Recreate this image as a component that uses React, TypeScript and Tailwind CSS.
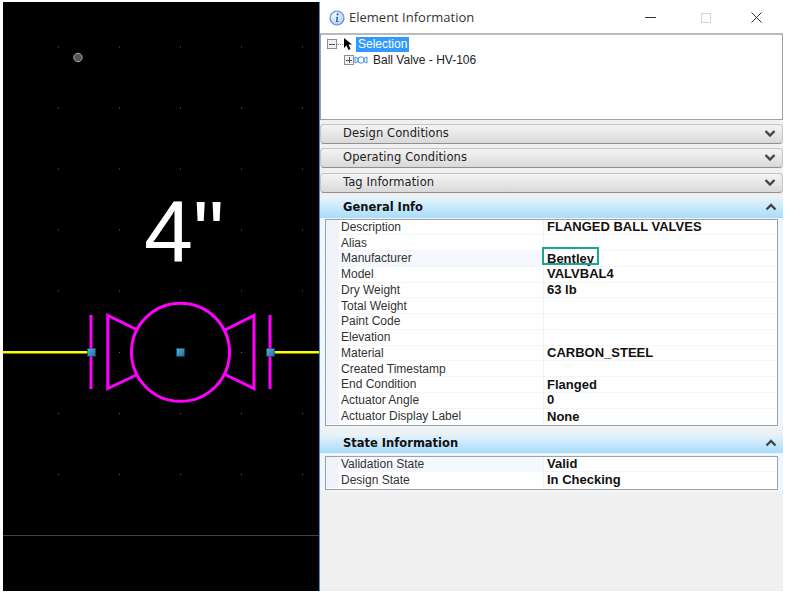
const SANS = "font-['Liberation_Sans',Arial,sans-serif]";

function Canvas() {
  const xs = [58, 119, 180, 241, 302];
  const ys = [46.5, 107.5, 168.5, 229.5, 290.5, 352, 413, 474];
  return (
    <div className="w-[316px] h-full bg-black shrink-0">
      <svg width="316" height="589" viewBox="3 2 316 589" className="block">
        {xs.map((x) =>
          ys.map((y) => <rect key={x + "-" + y} x={x} y={y} width="1" height="1" fill="#666" />)
        )}
        <circle cx="78" cy="57.5" r="4.2" fill="#555" stroke="#aaa" strokeWidth="1" />
        <line x1="3" y1="535.5" x2="319" y2="535.5" stroke="#444" strokeWidth="1" />
        <text x="144" y="262" fill="#fff" fontSize="88" fontFamily="'Liberation Sans',Arial,sans-serif">
          4"
        </text>
        <line x1="3" y1="352.3" x2="88" y2="352.3" stroke="#ffff00" strokeWidth="2.4" />
        <line x1="274" y1="352.3" x2="319" y2="352.3" stroke="#ffff00" strokeWidth="2.4" />
        <g fill="none" stroke="#ff00ff" strokeWidth="3">
          <circle cx="180.5" cy="352.3" r="49" />
          <line x1="91" y1="315" x2="91" y2="389" />
          <line x1="270" y1="315" x2="270" y2="389" />
          <path d="M137.5 330 L107.8 315.5 V388.5 L137.5 374.5" />
          <path d="M225 330 L254 315.5 V388.5 L225 374.5" />
        </g>
        <defs>
          <linearGradient id="nodeFill" x1="0" y1="0" x2="1" y2="1">
            <stop offset="0" stopColor="#5fb0dc" />
            <stop offset="1" stopColor="#1f6f9f" />
          </linearGradient>
        </defs>
        {[91.5, 180.5, 270.5].map((x) => (
          <rect key={x} x={x - 4} y="348.3" width="8" height="8" fill="url(#nodeFill)" stroke="#0f4a66" strokeWidth="0.6" />
        ))}
      </svg>
    </div>
  );
}

function Chevrons({ up, double }: { up?: boolean; double?: boolean }) {
  return (
    <svg width="12" height="10" viewBox="0 0 12 10" className="block">
      <g fill="none" stroke="#444" strokeWidth="2.4">
        {up ? (
          <path d="M1.5 7.5 L6 3 L10.5 7.5" />
        ) : (
          <path d="M1.5 2 L6 6.5 L10.5 2" />
        )}
        {double && <path d="M1.5 5.5 L6 10 L10.5 5.5" stroke="#777" strokeWidth="1.4" />}
      </g>
    </svg>
  );
}

function CollapsedHeader({ title, className }: { title: string; className: string }) {
  return (
    <div className={`${className} h-5 rounded-[4px] border border-[#c4c4c4] border-b-[#8f8f8f] bg-gradient-to-b from-[#f4f4f4] to-[#d9d9d9] flex items-center justify-between pl-[22px] pr-[6px]`}>
      <span className="font-['DejaVu_Sans',Verdana,sans-serif] text-[11.5px] tracking-[0.1px] text-[#222]">{title}</span>
      <Chevrons />
    </div>
  );
}

function OpenHeader({ title, className }: { title: string; className: string }) {
  return (
    <div className={`${className} rounded-t-[4px] bg-gradient-to-b from-[#e6f4fd] to-[#a9dcfa] flex items-center justify-between pl-[23px] pr-[6px]`}>
      <span className="font-['DejaVu_Sans',Verdana,sans-serif] font-bold text-[11.5px] text-[#111] pt-[2px]">{title}</span>
      <Chevrons up />
    </div>
  );
}

function Row({ label, value, tint, last }: { label: string; value?: string; tint?: boolean; last?: boolean }) {
  return (
    <div className={`flex h-[15.75px] ${last ? "" : "border-b border-[#f2f5f9]"}`}>
      <div className={`w-[13px] shrink-0 bg-[#f0f4fa]`} />
      <div className={`w-[205px] shrink-0 pl-[2px] flex items-center text-[12px] text-[#333] border-r border-[#eef1f5] ${tint ? "bg-[#f5f8fc]" : "bg-white"} ${SANS}`}>
        {label}
      </div>
      <div className={`flex-1 pl-[3px] flex items-center text-[13px] font-bold text-[#111] bg-white ${SANS}`}>
        {value === "Bentley" ? (
          <span className="relative">
            {value}
            <span className="absolute -left-[5px] -top-[2px] w-[57px] h-[18px] border-[2px] border-[#1fa58f]" />
          </span>
        ) : (
          value
        )}
      </div>
    </div>
  );
}

const general: [string, string?][] = [
  ["Description", "FLANGED BALL VALVES"],
  ["Alias"],
  ["Manufacturer", "Bentley"],
  ["Model", "VALVBAL4"],
  ["Dry Weight", "63 lb"],
  ["Total Weight"],
  ["Paint Code"],
  ["Elevation"],
  ["Material", "CARBON_STEEL"],
  ["Created Timestamp"],
  ["End Condition", "Flanged"],
  ["Actuator Angle", "0"],
  ["Actuator Display Label", "None"],
];

function Tree() {
  return (
    <div className={`mt-0 h-[87px] bg-white border-t-2 border-t-[#b8bcc0] border-x border-x-[#a0a0a0] border-b border-b-[#a0a0a0] pl-[6px] pt-[1px] ${SANS}`}>
      <div className="flex items-center h-[16px]">
        <span className="w-[10px] h-[10px] border border-[#8a8f96] bg-[#eef0f2] flex items-center justify-center shrink-0">
          <span className="w-[6px] h-[1px] bg-[#555]" />
        </span>
        <span className="w-[6px] border-t border-dotted border-[#999]" />
        <svg width="10" height="14" viewBox="0 0 10 14" className="shrink-0">
          <path d="M1 1 V11 L3.5 8.5 L5.5 13 L7.5 12 L5.5 7.5 H9 Z" fill="#000" />
        </svg>
        <span className="ml-[3px] h-[15px] px-[2px] bg-[#3399ff] text-white text-[12px] leading-[15px] w-[53px]">Selection</span>
      </div>
      <div className="flex items-center h-[16px] pl-[17px]">
        <span className="w-[10px] h-[10px] border border-[#8a8f96] bg-[#eef0f2] flex items-center justify-center relative shrink-0">
          <span className="w-[6px] h-[1px] bg-[#555]" />
          <span className="absolute w-[1px] h-[6px] bg-[#555]" />
        </span>
        <svg width="14" height="10" viewBox="0 0 14 10" className="shrink-0">
          <g fill="none" stroke="#3f8fe0" strokeWidth="1">
            <path d="M1 2 V8 L4 6.5 V3.5 Z" />
            <path d="M13 2 V8 L10 6.5 V3.5 Z" />
            <circle cx="7" cy="5" r="3.2" />
          </g>
        </svg>
        <span className="ml-[5px] text-[12px] text-[#222]">Ball Valve - HV-106</span>
      </div>
    </div>
  );
}

function TitleBar() {
  return (
    <div className="h-[31px] flex items-center bg-white pl-[9px]">
      <svg width="16" height="16" viewBox="0 0 16 16" className="shrink-0">
        <defs>
          <radialGradient id="infoBg" cx="0.4" cy="0.35" r="0.75">
            <stop offset="0" stopColor="#ffffff" />
            <stop offset="1" stopColor="#a9c5f2" />
          </radialGradient>
        </defs>
        <circle cx="8" cy="8" r="7" fill="url(#infoBg)" stroke="#5b8fe0" strokeWidth="1.2" />
        <circle cx="8.6" cy="4.4" r="1.1" fill="#2f62c9" />
        <path d="M6.6 6.8 H9.2 L8.4 11.2 H9.6 V12 H6.8 L7.6 7.6 H6.6 Z" fill="#2f62c9" />
      </svg>
      <span className="ml-[4px] font-['Open_Sans',sans-serif] text-[13px] text-[#333]">Element Information</span>
      <div className="ml-auto flex items-center">
        <span className="w-[11px] h-[1px] bg-[#333]" />
        <span className="ml-[45px] w-[10px] h-[10px] border border-[#d4d4d4]" />
        <svg width="11" height="11" viewBox="0 0 11 11" className="ml-[40px] mr-[21px]">
          <path d="M0.5 0.5 L10.5 10.5 M10.5 0.5 L0.5 10.5" stroke="#333" strokeWidth="1" />
        </svg>
      </div>
    </div>
  );
}

export default function App() {
  return (
    <div className="w-[787px] h-[594px] bg-white pl-[3px] pt-[2px] pb-[3px] pr-[4px] flex overflow-hidden">
      <Canvas />
      <div className="w-[1px] bg-[#3d8fd0] shrink-0" />
      <div className="flex-1 bg-[#f0f0f0] flex flex-col">
        <TitleBar />
        <Tree />
        <div className="mt-[4px] flex flex-col">
          <CollapsedHeader title="Design Conditions" className="" />
          <CollapsedHeader title="Operating Conditions" className="mt-[4px]" />
          <CollapsedHeader title="Tag Information" className="mt-[4.5px]" />
          <OpenHeader title="General Info" className="mt-[4px] h-[21px]" />
          <div className="h-[211px] bg-[#edf6fd] rounded-b-[3px] px-[5px] pt-[1px]">
            <div className="h-[207px] border border-[#a0a0a0] bg-white w-[453px]">
              {general.map(([l, v], i) => (
                <Row key={l} label={l} value={v} tint={l === "Manufacturer"} last={i === general.length - 1} />
              ))}
            </div>
          </div>
          <OpenHeader title="State Information" className="mt-[5px] h-[19px]" />
          <div className="h-[39px] bg-[#edf6fd] rounded-b-[3px] px-[5px] pt-[3px]">
            <div className="h-[34px] border border-[#a0a0a0] bg-white w-[453px]">
              <Row label="Validation State" value="Valid" tint />
              <Row label="Design State" value="In Checking" last />
            </div>
          </div>
        </div>
      </div>
    </div>
  );
}
